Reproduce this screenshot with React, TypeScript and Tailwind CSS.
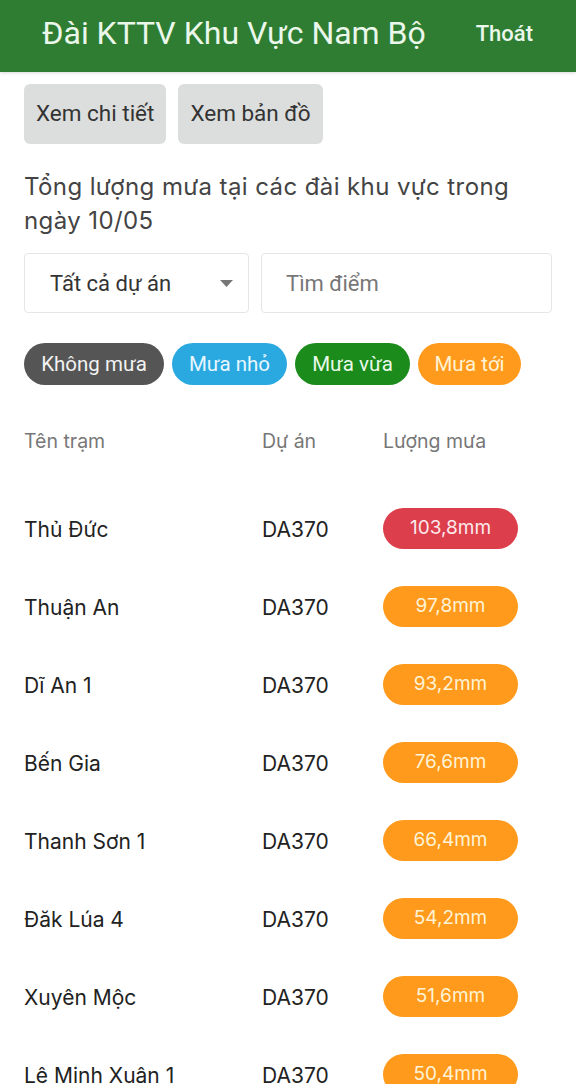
import { useState } from 'react';

interface Station {
  name: string;
  project: string;
  rain: number;
}

const stations: Station[] = [
  { name: 'Thủ Đức', project: 'DA370', rain: 103.8 },
  { name: 'Thuận An', project: 'DA370', rain: 97.8 },
  { name: 'Dĩ An 1', project: 'DA370', rain: 93.2 },
  { name: 'Bến Gia', project: 'DA370', rain: 76.6 },
  { name: 'Thanh Sơn 1', project: 'DA370', rain: 66.4 },
  { name: 'Đăk Lúa 4', project: 'DA370', rain: 54.2 },
  { name: 'Xuyên Mộc', project: 'DA370', rain: 51.6 },
  { name: 'Lê Minh Xuân 1', project: 'DA370', rain: 50.4 },
];

const legend = [
  { label: 'Không mưa', cls: 'bg-[#555555] text-[#f2f2f2] w-[140px]' },
  { label: 'Mưa nhỏ', cls: 'bg-[#2aa9e1] text-[#e8f6ff] w-[115px]' },
  { label: 'Mưa vừa', cls: 'bg-[#1b8b1b] text-[#e9f9e9] w-[115px]' },
  { label: 'Mưa tới', cls: 'bg-[#ff9a1c] text-[#fff3d6] w-[103px]' },
];

function rainBadge(mm: number) {
  // above 100mm shows red, otherwise orange
  return mm >= 100 ? 'bg-[#dc3e4c] text-[#fde9ec]' : 'bg-[#ff9a1c] text-[#fff3d6]';
}

export default function App() {
  const [query, setQuery] = useState('');

  return (
    <div className="min-h-screen bg-white font-['Roboto',sans-serif]">
      {/* Header */}
      <div className="flex h-[72px] items-center justify-between bg-[#2e7d32] pb-[6px] pl-[42px] pr-[43px] shadow-[0_1px_3px_rgba(0,0,0,0.15)]">
        <h1 className="text-[32px] text-[#eaf7ea]">Đài KTTV Khu Vực Nam Bộ</h1>
        <button className="text-[22px] font-medium text-[#eaf7ea]">Thoát</button>
      </div>

      <div className="px-6">
        {/* Actions */}
        <div className="mt-3 flex gap-3">
          <button className="h-[60px] rounded-md bg-[#dcdedd] px-3 text-[22.5px] text-[#333]">Xem chi tiết</button>
          <button className="h-[60px] rounded-md bg-[#dcdedd] px-3 text-[22.5px] text-[#333]">Xem bản đồ</button>
        </div>

        <p className="mt-[26px] max-w-[500px] font-['Inter',sans-serif] text-[24px] leading-[34px] tracking-[0.4px] text-[#444]">
          Tổng lượng mưa tại các đài khu vực trong ngày 10/05
        </p>

        {/* Filters */}
        <div className="mt-[15px] flex gap-3">
          <div className="flex h-[60px] w-[225px] shrink-0 items-center justify-between rounded border border-[#e6e6e6] pl-[25px] pr-[15px]">
            <span className="text-[22px] text-[#333]">Tất cả dự án</span>
            <svg width="13" height="7" viewBox="0 0 13 7">
              <path d="M0 0h13L6.5 7z" fill="#777" />
            </svg>
          </div>
          <input
            value={query}
            onChange={e => setQuery(e.target.value)}
            placeholder="Tìm điểm"
            className="h-[60px] min-w-0 flex-1 rounded border border-[#e6e6e6] px-6 text-[22px] text-[#333] placeholder:text-[#777] outline-none"
          />
        </div>

        {/* Legend */}
        <div className="mt-[30px] flex gap-2">
          {legend.map(l => (
            <span key={l.label} className={`flex h-[42px] items-center justify-center rounded-full text-[20.5px] ${l.cls}`}>
              {l.label}
            </span>
          ))}
        </div>

        {/* Table */}
        <div className="font-['Inter',sans-serif]">
          <div className="mt-[22px] grid h-[70px] grid-cols-[238px_121px_1fr] items-center text-[19.5px] text-[#777]">
            <span>Tên trạm</span>
            <span>Dự án</span>
            <span>Lượng mưa</span>
          </div>
          <div className="mt-[14px]">
            {stations.map(s => (
              <div key={s.name} className="grid h-[78px] grid-cols-[238px_121px_1fr] items-center text-[21px] text-[#222]">
                <span>{s.name}</span>
                <span>{s.project}</span>
                <span className={`-mt-[4px] flex h-[41px] w-[135px] items-center justify-center rounded-full text-[19px] ${rainBadge(s.rain)}`}>
                  {s.rain.toFixed(1).replace('.', ',')}mm
                </span>
              </div>
            ))}
          </div>
        </div>
      </div>
    </div>
  );
}
